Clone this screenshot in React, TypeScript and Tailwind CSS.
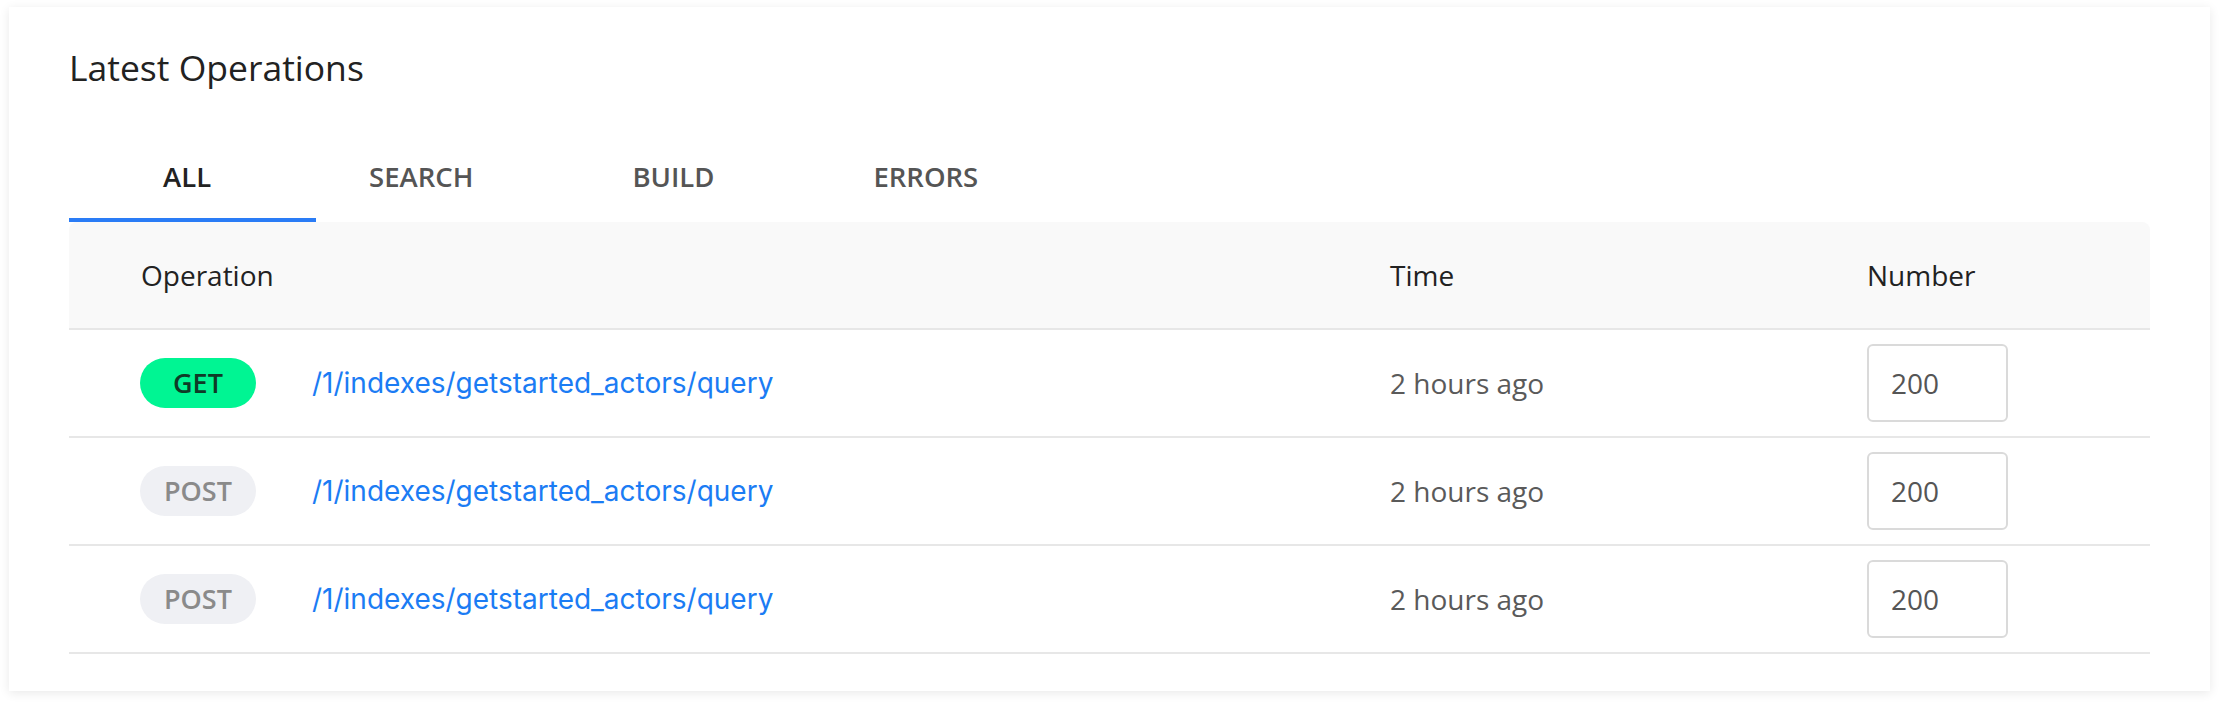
import { useState } from 'react';

const tabs = ['ALL', 'SEARCH', 'BUILD', 'ERRORS'];

const rows = [
  { method: 'GET', path: '/1/indexes/getstarted_actors/query', time: '2 hours ago', count: '200' },
  { method: 'POST', path: '/1/indexes/getstarted_actors/query', time: '2 hours ago', count: '200' },
  { method: 'POST', path: '/1/indexes/getstarted_actors/query', time: '2 hours ago', count: '200' },
];

function MethodBadge({ method }: { method: string }) {
  const isGet = method === 'GET';
  return (
    <span
      className={
        isGet
          ? 'flex h-[50px] w-[116px] items-center justify-center rounded-full bg-[#00f593] text-[27px] font-semibold text-[#0f3a27]'
          : 'flex h-[50px] w-[116px] items-center justify-center rounded-full bg-[#eff0f4] text-[27px] font-semibold text-[#8a8a8a]'
      }
    >
      {method}
    </span>
  );
}

export default function App() {
  const [active, setActive] = useState(0);

  return (
    <main className="min-h-screen bg-white pl-[9px] pr-[10px] pt-[7px] pb-4 font-['Open_Sans',sans-serif]">
      <section className="bg-white px-[60px] pt-[36px] pb-[37px] shadow-[0_2px_10px_rgba(0,0,0,0.09)]">
        <h2 className="text-[35.5px] leading-[48px] font-normal text-[#222]">Latest Operations</h2>

        <div className="mt-[41px] flex">
          {tabs.map((t, i) => (
            <button
              key={t}
              onClick={() => setActive(i)}
              className={
                i === 0
                  ? `pl-[94px] pr-[105px] pt-[26px] pb-[22px] border-b-4 text-[27.5px] leading-[38px] font-semibold ${
                      active === i ? 'border-[#2a7cf6] text-[#222]' : 'border-transparent text-[#555]'
                    }`
                  : `pl-[53px] pr-[106px] pt-[26px] pb-[22px] border-b-4 text-[27.5px] leading-[38px] font-semibold ${
                      active === i ? 'border-[#2a7cf6] text-[#222]' : 'border-transparent text-[#555]'
                    }`
              }
            >
              {t}
            </button>
          ))}
        </div>

        <div className="text-[28px] leading-[38px]">
          <div className="grid h-[108px] grid-cols-[1321px_477px_1fr] items-center rounded-t-[8px] border-b-2 border-[#e7e7e7] bg-[#f9f9f9] text-[#222]">
            <div className="pl-[72px]">Operation</div>
            <div>Time</div>
            <div>Number</div>
          </div>
          {rows.map((r, i) => (
            <div
              key={i}
              className="grid h-[108px] grid-cols-[1321px_477px_1fr] items-center border-b-2 border-[#e7e7e7]"
            >
              <div className="flex items-center pl-[71px]">
                <MethodBadge method={r.method} />
                <a href="#" className="ml-[56px] font-['Inter',sans-serif] text-[28px] text-[#1b7cf4]">
                  {r.path}
                </a>
              </div>
              <div className="text-[#5a5a5a]">{r.time}</div>
              <div>
                <input
                  defaultValue={r.count}
                  className="h-[78px] w-[141px] rounded-[6px] border-2 border-[#dadada] bg-white pl-[22px] text-[28px] text-[#555] outline-none"
                />
              </div>
            </div>
          ))}
        </div>
      </section>
    </main>
  );
}
